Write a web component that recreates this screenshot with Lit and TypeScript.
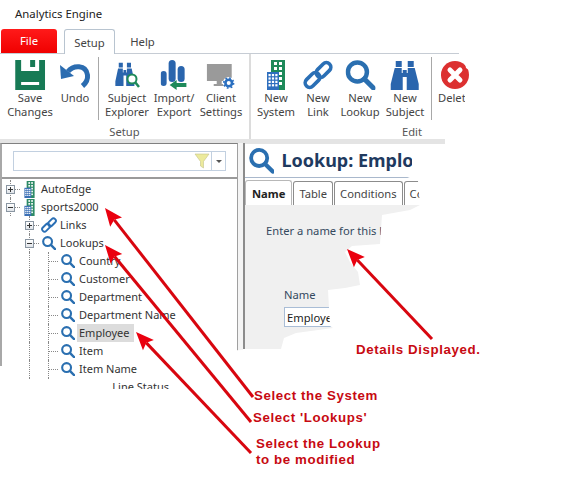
import { LitElement, html, css, svg } from "lit";
import { customElement } from "lit/decorators.js";

const BLUE = "#2b6cb0";

const saveIcon = svg`<svg width="30" height="30" viewBox="0 0 30 30"><path fill="#177a55" d="M0 0h6v11h18V0h6v30H0z"/><path fill="#177a55" d="M15 0h5v7h-5z"/><rect x="6" y="22" width="18" height="3" fill="#fff"/></svg>`;
const undoIcon = svg`<svg width="32" height="26" viewBox="0 0 32 26"><path fill="none" stroke="${BLUE}" stroke-width="5" d="M9 9.5C14 3 27 2 28.5 13c.5 4-1.500 8-5 11"/><path fill="${BLUE}" d="M1 3l1 14 13-3z"/></svg>`;
const binoc = svg`<path fill="#2a65ad" d="M7 1h6v6H7zM19 1h6v6h-6zM6 8h7v5h1v-3h4v3h1V8h7l4 16v6H18V17h-4v13H2v-6z"/>`;
const binocIcon = svg`<svg width="32" height="30" viewBox="0 0 32 30">${binoc}</svg>`;
const subjectIcon = svg`<svg width="26" height="27" viewBox="0 0 26 27"><g transform="scale(.68 .8)">${binoc}</g><circle cx="18" cy="17" r="4.500" fill="#fff" stroke="#1e8a5a" stroke-width="2"/><path d="M21 20l4 5" stroke="#1e8a5a" stroke-width="2.500"/></svg>`;
const importIcon = svg`<svg width="26" height="30" viewBox="0 0 26 30"><rect x="0" y="11" width="6" height="15" rx="3" fill="#2a65ad"/><rect x="8" y="0" width="7" height="22" rx="3.500" fill="#2a65ad"/><rect x="17" y="6" width="7" height="16" rx="3.500" fill="#2a65ad"/><path fill="#1e8a5a" d="M9 25l7-5v3h10v4H16v3z"/></svg>`;
const clientIcon = svg`<svg width="28" height="28" viewBox="0 0 28 28"><rect x="0" y="3" width="25" height="17" fill="#9a9a9a"/><path fill="#9a9a9a" d="M10 20h5v3h3v2H7v-2h3z"/><circle cx="22" cy="22" r="6" fill="#fff"/><circle cx="22" cy="22" r="3.300" fill="none" stroke="#2a6fc0" stroke-width="2.600"/><circle cx="22" cy="22" r="5" fill="none" stroke="#2a6fc0" stroke-width="1.600" stroke-dasharray="1.800 2.100"/></svg>`;
const windows = (x: number, y: number, cols: number, rows: number, s: number, p: number) => {
  const out = [];
  for (let r = 0; r < rows; r++)
    for (let c = 0; c < cols; c++)
      out.push(svg`<rect x="${x + c * p}" y="${y + r * p}" width="${s}" height="${s}" fill="#fff"/>`);
  return out;
};
const buildingBig = svg`<svg width="18" height="30" viewBox="0 0 18 30"><rect x="4" y="0" width="14" height="30" fill="#1e8a5a"/>${windows(7, 2, 2, 5, 3, 5)}<rect x="0" y="12" width="12" height="18" fill="#2f6fbe"/>${windows(1.500, 14, 3, 4, 2.200, 3.400)}</svg>`;
const buildingSmall = svg`<svg width="11" height="17" viewBox="0 0 18 30"><rect x="4" y="0" width="14" height="30" fill="#2d8a66"/>${windows(7, 2, 2, 5, 3, 5)}<rect x="0" y="12" width="12" height="18" fill="#3a6fb5"/>${windows(1.500, 14, 3, 4, 2.200, 3.400)}</svg>`;
const link = (w: number) => svg`<svg width="${w}" height="${w}" viewBox="0 0 30 30"><g fill="none" stroke="#2a6fb5" stroke-width="3.600"><rect x="1" y="15.500" width="17" height="9" rx="4.500" transform="rotate(-45 9.500 20)"/><rect x="12" y="5.500" width="17" height="9" rx="4.500" transform="rotate(-45 20.500 10)"/></g></svg>`;
const mag = (w: number) => svg`<svg width="${w}" height="${w}" viewBox="0 0 30 30"><circle cx="12" cy="12" r="9.500" fill="none" stroke="#2a6fb0" stroke-width="4.500"/><path d="M19 19l9 9" stroke="#2a6fb0" stroke-width="5" stroke-linecap="round"/></svg>`;
const deleteIcon = svg`<svg width="28" height="30" viewBox="0 0 28 30"><circle cx="14" cy="15" r="14" fill="#dc3030"/><path d="M9 10l10 10M19 10L9 20" stroke="#fff" stroke-width="5" stroke-linecap="round"/></svg>`;
const funnel = svg`<svg width="16" height="16" viewBox="0 0 16 16"><path fill="#ecea9c" stroke="#c4c28a" stroke-width=".6" d="M1 1h14L9.500 8.500V15L6.500 13V8.500z"/></svg>`;

type Item = { label: string[]; icon: unknown; cx: number };
const setupItems: Item[] = [
  { label: ["Save", "Changes"], icon: saveIcon, cx: 30 },
  { label: ["Undo"], icon: undoIcon, cx: 75 },
  { label: ["Subject", "Explorer"], icon: subjectIcon, cx: 127 },
  { label: ["Import/", "Export"], icon: importIcon, cx: 174 },
  { label: ["Client", "Settings"], icon: clientIcon, cx: 221 },
];
const editItems: Item[] = [
  { label: ["New", "System"], icon: buildingBig, cx: 276 },
  { label: ["New", "Link"], icon: link(30), cx: 318 },
  { label: ["New", "Lookup"], icon: mag(30), cx: 360 },
  { label: ["New", "Subject"], icon: binocIcon, cx: 405 },
  { label: ["Delete"], icon: deleteIcon, cx: 455 },
];

type Row = { text: string; level: number; exp?: "+" | "-"; icon: unknown; sel?: boolean };
const rows: Row[] = [
  { text: "AutoEdge", level: 0, exp: "+", icon: buildingSmall },
  { text: "sports2000", level: 0, exp: "-", icon: buildingSmall },
  { text: "Links", level: 1, exp: "+", icon: link(16) },
  { text: "Lookups", level: 1, exp: "-", icon: mag(14) },
  ...["Country", "Customer", "Department", "Department Name", "Employee", "Item", "Item Name", "Order Line Status"].map(
    (t) => ({ text: t, level: 2, icon: mag(14), sel: t === "Employee" }) as Row
  ),
];

const notes = [
  { t: "Details Displayed.", x: 356, y: 342 },
  { t: "Select the System", x: 254, y: 388 },
  { t: "Select 'Lookups'", x: 253, y: 410 },
  { t: "Select the Lookup", x: 256, y: 436 },
  { t: "to be modified", x: 256, y: 452 },
];

const arrows = [
  [105, 208, 253, 397],
  [105, 245, 251, 422],
  [136, 332, 251, 453],
  [347, 249, 432, 339],
];

const arrow = ([x1, y1, x2, y2]: number[]) => {
  const a = Math.atan2(y2 - y1, x2 - x1);
  const L = 18, W = 7.500;
  const bx = x1 + Math.cos(a) * L, by = y1 + Math.sin(a) * L;
  const nx = -Math.sin(a) * W, ny = Math.cos(a) * W;
  const nb = x1 + Math.cos(a) * (L - 3), mb = y1 + Math.sin(a) * (L - 3);
  return svg`<line x1="${nb}" y1="${mb}" x2="${x2}" y2="${y2}" stroke="#d8060f" stroke-width="3"/>
    <path fill="#ea000f" d="M${x1} ${y1}L${bx + nx} ${by + ny}L${nb} ${mb}L${bx - nx} ${by - ny}z"/>`;
};

@customElement("app-root")
export class AppRoot extends LitElement {
  static styles = css`
    :host { display: block; position: relative; width: 562px; height: 484px; overflow: hidden; background: #fff;
      font-family: "Noto Sans", "Open Sans", sans-serif; font-size: 11.200px; color: #444; }
    .title { height: 29px; display: flex; align-items: center; padding: 0 0 3px 15px; color: #222; box-sizing: border-box; font-size: 11.400px; }
    .tabs { width: 459px; height: 25px; box-sizing: border-box; border-bottom: 1px solid #c6ccd4; display: flex; align-items: stretch; }
    .file { width: 56px; margin-left: 1px; height: 24px; border-radius: 3px 3px 0 0; background: linear-gradient(#ff1a1a, #f00000); color: #fff;
      display: flex; align-items: center; justify-content: center; font-size: 11.300px; box-sizing: border-box; padding-bottom: 2px; }
    .tab { width: 51px; margin-left: 7px; height: 25px; box-sizing: border-box; border: 1px solid #b8c4d0; border-bottom: none; background: #fff;
      border-radius: 3px 3px 0 0; display: flex; align-items: center; justify-content: center; font-size: 11.300px; color: #444; }
    .help { margin-left: 14px; width: 27px; display: flex; align-items: center; justify-content: center; font-size: 11.300px; color: #444; }
    .ribbon { display: flex; height: 85px; }
    .group { position: relative; height: 85px; flex: none; }
    .g-setup { width: 249px; }
    .g-edit { width: 322px; border-left: 2px solid #dcdcdc; }
    .g-label { position: absolute; left: 0; right: 0; top: 70px; text-align: center; line-height: 16px; color: #555; }
    .item { position: absolute; top: 6px; display: flex; flex-direction: column; align-items: center; transform: translateX(-50%); white-space: nowrap; }
    .item-icon { height: 30px; display: flex; align-items: center; justify-content: center; }
    .item-text { text-align: center; line-height: 14px; padding-top: 1px; }
    .sep { position: absolute; top: 3px; height: 63px; width: 1px; background: #a8a8a8; }
    .main { width: 445px; height: 257px; border-top: 4px solid #e4e4e4; display: flex; box-sizing: content-box; }
    .left { width: 238px; flex: none; box-sizing: border-box; border-left: 2px solid #a8a8a8; border-right: 1px solid #a0a0a0; border-top: 1px solid #808080; display: flex; flex-direction: column; }
    .filter-wrap { height: 35px; flex: none; box-sizing: border-box; border-bottom: 2px solid #9a9a9a; padding: 7px 11px 0; }
    .filter { height: 20px; width: 213px; box-sizing: border-box; border: 1px solid #c2d0e0; display: flex; background: #fff; }
    .f-input { flex: 1; display: flex; justify-content: flex-end; align-items: center; border-right: 1px solid #c2d0e0; padding-right: 1px; }
    .f-drop { width: 13px; display: flex; align-items: center; justify-content: center; }
    .f-drop i { border: 3px solid transparent; border-top: 3px solid #555; border-bottom: none; display: block; }
    .tree { padding-top: 1px; margin-left: -1px; }
    .row { height: 18px; display: flex; align-items: stretch; color: #333; font-size: 11px; }
    .cell { width: 19px; flex: none; position: relative; }
    .cell.v::before { content: ""; position: absolute; left: 9px; top: 0; bottom: 0; border-left: 1px dotted #888; }
    .cell.h::after { content: ""; position: absolute; left: 10px; right: 0; top: 9px; border-top: 1px dotted #888; }
    .exp { position: absolute; left: 5px; top: 5px; width: 9px; height: 9px; box-sizing: border-box; border: 1px solid #8a96a2; background: linear-gradient(#fff, #dfe3e8); z-index: 1; display: block; }
    .exp::before { content: ""; position: absolute; left: 1px; right: 1px; top: 3px; height: 1px; background: #333; }
    .exp.plus::after { content: ""; position: absolute; top: 1px; bottom: 1px; left: 3px; width: 1px; background: #333; }
    .r-icon { width: 19px; flex: none; display: flex; align-items: center; justify-content: center; }
    .r-text { padding: 0 5px 0 2px; line-height: 18px; white-space: nowrap; }
    .r-text.sel { background: #dcdcdc; }
    .gap { width: 5px; flex: none; background: #f4f4f4; }
    .right { flex: 1; min-width: 0; border-left: 2px solid #8c8c8c; display: flex; flex-direction: column; height: 206px; }
    .head { height: 35px; flex: none; box-sizing: border-box; display: flex; align-items: center; gap: 7px; padding: 0 0 1px 4px; border-bottom: 1px solid #a9b8cc; border-top: 1px solid #e4e4e4; }
    .head b { font-size: 18px; color: #1f3a5f; white-space: nowrap; }
    .d-tabs { display: flex; height: 27px; flex: none; align-items: flex-end; gap: 1px; }
    .d-tab { height: 24px; box-sizing: border-box; border: 1px solid #8c8c8c; border-bottom: none; border-radius: 3px 3px 0 0; padding: 0 5px; display: flex; align-items: center; color: #444; white-space: nowrap; flex: none; background: #fff; }
    .d-tab.on { font-weight: 700; color: #222; padding: 0 6px; height: 25px; border-color: #b8b8b8; }
    .panel { flex: 1; background: #f0f0f0; padding: 18px 0 0 21px; color: #34495e; overflow: hidden; position: relative; }
    .hint { line-height: 16px; white-space: nowrap; }
    .name-l { margin: 48px 0 0 18px; line-height: 16px; }
    .name-i { margin: 4px 0 0 18px; width: 70px; height: 20px; box-sizing: border-box; border: 1px solid #a9bdd6; background: #fff; padding-left: 2px; line-height: 19px; color: #222; }
    .overlay { position: absolute; left: 0; top: 0; }
    .note { position: absolute; font-family: "Liberation Sans", Arial, sans-serif; font-weight: 700; font-size: 13.300px; letter-spacing: 0.600px; color: #c70a12; line-height: 16px; white-space: nowrap; }
  `;

  private item(i: Item, base: number) {
    return html`<div class="item" style="left:${i.cx - base}px">
      <div class="item-icon">${i.icon}</div>
      <div class="item-text">${i.label.map((l) => html`<div>${l}</div>`)}</div>
    </div>`;
  }

  private row(r: Row) {
    const cells = [];
    for (let i = 0; i <= r.level; i++) {
      const last = i === r.level;
      let cls = "cell";
      if (i === 1 || i === 2) cls += " v";
      if (i === 0 && r.level === 0) cls += " v";
      if (last) cls += " h";
      cells.push(html`<div class="${cls}">${last && r.exp ? html`<span class="exp ${r.exp === "+" ? "plus" : ""}"></span>` : ""}</div>`);
    }
    return html`<div class="row">${cells}<div class="r-icon">${r.icon}</div><div class="r-text ${r.sel ? "sel" : ""}">${r.text}</div></div>`;
  }

  render() {
    return html`
      <div class="title">Analytics Engine</div>
      <div class="tabs"><div class="file">File</div><div class="tab">Setup</div><div class="help">Help</div></div>
      <div class="ribbon">
        <div class="group g-setup">
          ${setupItems.map((i) => this.item(i, 0))}
          <div class="sep" style="left:98px"></div>
          <div class="g-label">Setup</div>
        </div>
        <div class="group g-edit">
          ${editItems.map((i) => this.item(i, 251))}
          <div class="sep" style="left:180px"></div>
          <div class="g-label">Edit</div>
        </div>
      </div>
      <div class="main">
        <div class="left">
          <div class="filter-wrap">
            <div class="filter"><div class="f-input">${funnel}</div><div class="f-drop"><i></i></div></div>
          </div>
          <div class="tree">${rows.map((r) => this.row(r))}</div>
        </div>
        <div class="gap"></div>
        <div class="right">
          <div class="head">${mag(27)}<b>Lookup: Employee</b></div>
          <div class="d-tabs">
            <div class="d-tab on">Name</div><div class="d-tab">Table</div><div class="d-tab">Conditions</div><div class="d-tab">Columns</div>
          </div>
          <div class="panel">
            <div class="hint">Enter a name for this lookup</div>
            <div class="name-l">Name</div>
            <div class="name-i">Employee</div>
          </div>
        </div>
      </div>
      <svg class="overlay" width="562" height="484" viewBox="0 0 562 484">
        <path fill="#fff" d="M0 366L26 366L26 379L110 379L110 389L172 389L172 379L180 352L244 350L281 349L284 338L296 333L333 328L330 326L328 290L345 288L360 285L358 272L350 262L345 252L352 246L380 244L382 215L410 210L420 205L418 181L405 179L412 176L412 147L446 147L562 147L562 484L0 484z"/>
        <path fill="#fff" d="M465 95L480 95L480 115L465 115z"/>
        <path fill="#fff" d="M464 58L472 58L472 72L466 68z"/>
        ${arrows.map(arrow)}
      </svg>
      ${notes.map((n) => html`<div class="note" style="left:${n.x}px;top:${n.y}px">${n.t}</div>`)}
    `;
  }
}
